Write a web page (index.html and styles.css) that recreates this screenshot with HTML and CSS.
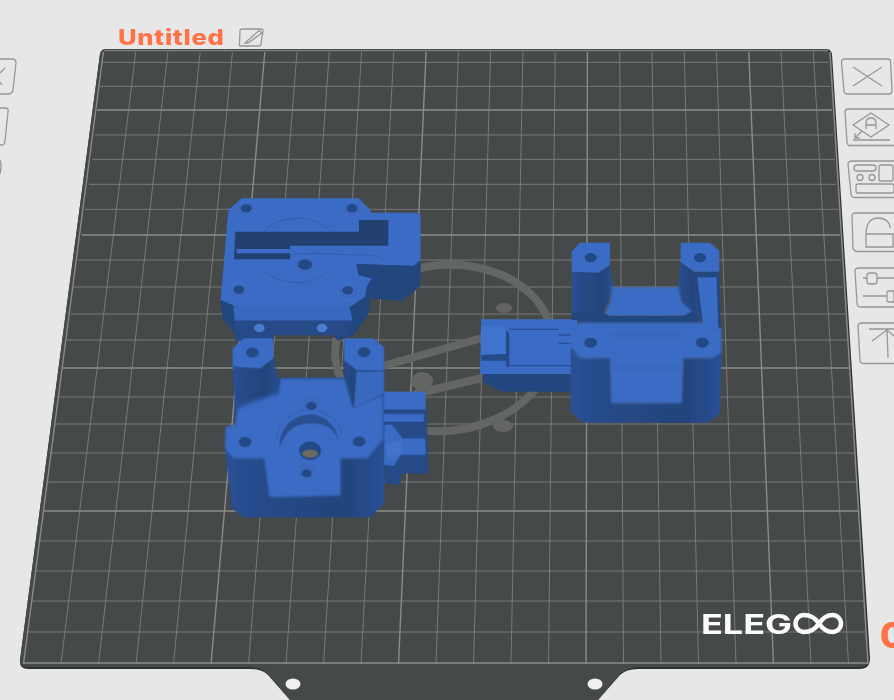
FILE: index.html
```html
<!DOCTYPE html>
<html lang="en">
<head>
<meta charset="utf-8">
<title>Untitled</title>
<link rel="stylesheet" href="styles.css">
</head>
<body>
<main class="stage">
<svg class="scene" width="894" height="700" viewBox="0 0 894 700" xmlns="http://www.w3.org/2000/svg">
  <defs>
    <filter id="soft" x="-5%" y="-5%" width="110%" height="110%"><feGaussianBlur stdDeviation="0.45"/></filter>
    <filter id="edge" x="-10%" y="-10%" width="120%" height="120%"><feGaussianBlur stdDeviation="2.5"/></filter>
    <filter id="shade" x="-30%" y="-30%" width="160%" height="160%"><feGaussianBlur stdDeviation="7"/></filter>
    <linearGradient id="sideA" x1="0" x2="1" y1="0" y2="0">
      <stop offset="0" stop-color="#2a5096"/><stop offset=".25" stop-color="#264a88"/><stop offset=".75" stop-color="#23447c"/><stop offset="1" stop-color="#2a5096"/>
    </linearGradient>
  </defs>

  <!-- print bed -->
  <g filter="url(#soft)">
    <path class="bed-edge" d="M106 49H826Q831 49 832 54L870 658Q870 669 860 669H638Q626 669 620 675L598 700H290L268 675Q262 669 250 669H28Q19 669 20 660L100 54Q101 49 106 49Z"/>
    <path class="bed" d="M106 49.500H826Q830 49.500 831 55L869 658Q869 667 860 667H638Q626 668 620 674L598 700H290L268 674Q262 668 250 667H28Q20 667 20 660L100 54Q101 49.500 106 49.500Z"/>
    <ellipse class="hole" cx="293" cy="684" rx="7.5" ry="5.5"/>
    <ellipse class="hole" cx="595" cy="684" rx="7.5" ry="5.5"/>
    <path class="bed-top" d="M104 50.500H828"/>

    <g class="grid">
      <path d="M135.7 52L61 664M167.9 52L98.5 664M200.2 52L136 664M232.5 52L173.5 664M297 52L248.5 664M329.3 52L286 664M361.6 52L323.5 664M393.8 52L361 664M458.4 52L436 664M490.6 52L473.5 664M522.9 52L511 664M555.2 52L548.5 664M619.7 52L623.5 664M652 52L661 664M684.3 52L698.5 664M716.5 52L736 664M781 52L811 664M813.3 52L848.5 664"/>
      <path d="M102 62.3H829M99 86.3H830M95 135H833M92 159.3H835M89 184.3H836M85 209.3H838M78 260H841M74 287H843M71 314H845M67 340H847M59 397H850M55 424H852M51 453H854M47 482H856M39 541H860M35 571H862M31 601H864M27 632H866"/>
    </g>
    <g class="grid-major">
      <path d="M103.4 52L23.5 664M264.8 52L211 664M426.1 52L398.5 664M587.4 52L586 664M748.8 52L773.5 664M830 52L868 664"/>
      <path d="M97 110H832M82 235H840M63 368H849M43 511H858M24 663H868"/>
    </g>

    <!-- bed watermark -->
    <g class="mark">
      <ellipse cx="444" cy="348" rx="109" ry="83" transform="rotate(-6 444 348)"/>
      <path d="M383 366L482 338M415 394L482 378"/>
    </g>
    <ellipse class="mark-dot" cx="504" cy="308" rx="8" ry="5"/>
    <ellipse class="mark-dot" cx="422" cy="381" rx="11" ry="9"/>
    <ellipse class="mark-dot" cx="503" cy="426" rx="10" ry="6"/>

    <!-- brand -->
    <text class="brand" x="701" y="633.500" textLength="91" lengthAdjust="spacingAndGlyphs">ELEG</text>
    <path class="brand-loop" d="M819 623.5C815 617.500 811 615 804 615A8.500 8.500 0 0 0 804 632C811 632 815 629.500 819 623.500C823 617.500 827 615 832.500 615A8.500 8.500 0 0 1 832.500 632C827 632 823 629.500 819 623.500Z"/>
  </g>

  <!-- part A : plate with slot -->
  <g class="part" transform="translate(210 190) scale(.3333)" filter="url(#soft)">
    <path class="dark" d="M30 320L38 385L72 428L78 452H185L192 435H365L385 452L430 436L475 375L482 325L575 332L630 290L632 215L445 222L440 250L470 265L465 320L420 350H80Z"/>
    <path class="light" d="M95 25H445L482 60V68H620Q632 68 632 80V210L610 228L440 222L445 255L485 265L470 290L465 320L420 350H80L32 330L55 60Z"/>
    <path class="dark" d="M440 222L610 228L632 212L630 290L575 332L482 325L485 265L445 255Z"/>
    <path class="mid" d="M70 348L418 348L428 392H74Z"/>
    <path class="side-dark" d="M74 392H428L415 436H192L185 452H78Z"/>
    <path class="navy" d="M76 125H447V90H535V167H240V208H72Z"/>
    <path class="light" d="M80 177H240V190H80Z"/>
    <path class="thin" d="M165 122C190 95 230 85 265 85C310 85 345 105 365 125M160 240C185 265 225 278 265 278C305 278 340 262 358 240M240 198C260 188 280 192 310 190L440 195C475 195 500 195 515 207"/>
    <ellipse class="sink" cx="110" cy="58" rx="30" ry="23"/><ellipse class="hole-in" cx="109" cy="55" rx="16" ry="12"/>
    <ellipse class="sink" cx="427" cy="58" rx="30" ry="23"/><ellipse class="hole-in" cx="426" cy="55" rx="16" ry="12"/>
    <ellipse class="sink" cx="88" cy="302" rx="30" ry="23"/><ellipse class="hole-in" cx="87" cy="299" rx="16" ry="12"/>
    <ellipse class="sink" cx="415" cy="305" rx="30" ry="23"/><ellipse class="hole-in" cx="413" cy="301" rx="16" ry="12"/>
    <ellipse class="sink" cx="284" cy="226" rx="36" ry="27"/><ellipse class="hole-in" cx="285" cy="224" rx="21" ry="15"/>
    <ellipse class="pale" cx="148" cy="414" rx="16" ry="13"/>
    <ellipse class="pale" cx="336" cy="414" rx="16" ry="13"/>
  </g>

  <!-- part B : extruder body -->
  <g class="part" transform="translate(210 330) scale(.3333)" filter="url(#soft)">
    <path class="side-dark" d="M515 235H650L655 430H575L570 465L525 460Z"/>
    <path class="light" d="M518 185H640Q647 185 647 195V238H518Z"/>
    <path class="light" d="M518 252H642V275H518Z"/>
    <path class="light" d="M523 285L545 283L578 325H645L648 375H572L552 408L520 405Z"/>
    <path class="pale" d="M525 345L575 330V372L535 385Z" opacity=".5"/>
    <path class="side" fill="url(#sideA)" d="M68 55L100 25H190V85L200 143H402V35L410 25H490L522 52V520L480 562H100L65 535L45 355L48 290L76 285Z"/>
    <path class="light" filter="url(#edge)" d="M82 238L203 195L212 146H405L428 232L518 195L520 325L472 385H392V497L178 502L163 385H70L45 355L48 290L76 285Z"/>
    <path class="side" filter="url(#edge)" fill="url(#sideA)" d="M68 110H150L190 85L200 143L205 190L80 222Z"/>
    <path class="light" d="M100 25H180Q190 25 190 35V85L150 115L68 110V55Z"/>
    <path class="side" filter="url(#edge)" fill="url(#sideA)" d="M402 90L440 122L432 230L415 170Z"/>
    <path class="mid" d="M440 125H522V190L432 232Z"/>
    <path class="light" d="M410 25H490L522 52V120H440L402 90V35Q402 25 410 25Z"/>
    <path class="soft-line" filter="url(#shade)" d="M90 235L205 195"/>
    <ellipse class="hole-in" cx="127" cy="68" rx="19" ry="15"/>
    <ellipse class="hole-in" cx="462" cy="67" rx="19" ry="15"/>
    <ellipse class="hole-in" cx="105" cy="336" rx="19" ry="15"/>
    <ellipse class="hole-in" cx="447" cy="335" rx="19" ry="15"/>
    <path class="crescent" d="M208 345C212 290 250 255 300 253C345 253 380 290 385 330C370 290 340 280 298 280C255 280 225 305 212 345Z"/>
    <path class="thin" d="M200 325C205 275 250 240 300 240C350 240 390 275 395 310"/>
    <ellipse class="sink" cx="304" cy="218" rx="31" ry="25"/><ellipse class="hole-in" cx="304" cy="228" rx="15" ry="12"/>
    <ellipse class="sink" cx="290" cy="420" rx="31" ry="25"/><ellipse class="hole-in" cx="290" cy="430" rx="15" ry="12"/>
    <ellipse class="hole-in" cx="300" cy="362" rx="33" ry="28"/>
    <ellipse class="through" cx="300" cy="371" rx="24" ry="12"/>
  </g>

  <!-- part C : housing with clip -->
  <g class="part" transform="translate(470 230) scale(.3333)" filter="url(#soft)">
    <path class="dark" d="M40 432H302V485H95L38 455Z"/>
    <path class="light" d="M33 268H320L325 300L305 330V432H30Z"/>
    <path class="navy-line" d="M118 298H265M265 315H302M265 340H302M118 407H302"/>
    <path class="side-dark" d="M108 300L118 310V410H108Z"/>
    <path class="mid-bright" d="M33 290L108 287V372L33 375Z"/>
    <path class="side-dark" d="M33 375L108 372V392L35 392Z"/>
    <path class="side" d="M305 125H385L420 105L428 170L400 250H305Z" fill="url(#sideA)"/>
    <path class="side" d="M632 95L672 125L688 270L640 245L625 170Z" fill="url(#sideA)"/>
    <path class="light" filter="url(#edge)" d="M425 172H625L635 215L668 245L640 258H400L420 215Z"/>
    <path class="dark" d="M305 248H400L420 258H640L668 245L688 262L688 280H325V270H305Z"/>
    <path class="dark" d="M672 125H748L752 295H700L686 250Z"/>
    <path class="light" d="M682 142H740L745 295H700Z"/>
    <path class="light" d="M330 38H420V105L385 128L305 125V65Z"/>
    <path class="light" d="M632 38H720L748 62V125L672 125L632 95Z"/>
    <path class="side" d="M302 350L330 385H420L425 520H635L640 385H725L755 360L750 550L715 578H340L302 545Z" fill="url(#sideA)"/>
    <path class="light" filter="url(#edge)" d="M325 278H700L755 296V368L725 385H640L636 520H424L420 385H330L302 350V330Z"/>
    <path class="mid" d="M408 305H652L625 325H440Z"/>
    <path class="mid" d="M425 405H635V420H425Z"/>
    <ellipse class="hole-in" cx="362" cy="83" rx="18" ry="14"/>
    <ellipse class="hole-in" cx="690" cy="83" rx="18" ry="14"/>
    <ellipse class="hole-in" cx="362" cy="338" rx="19" ry="15"/>
    <ellipse class="hole-in" cx="697" cy="338" rx="19" ry="15"/>
  </g>

  <!-- right toolbar -->
  <g class="tools" filter="url(#soft)">
    <path d="M845 59H888Q890.500 59 890.600 62L892 91Q892 94 889 94H847Q844.500 94 844 91L841.500 62Q841.500 59 845 59Z"/>
    <path d="M853 67L882 86M882 67L853 86"/>
    <path d="M848 109H894M848 145.500H894M848 109Q845 109 845 112L847 142Q847 145.500 850 145.500"/>
    <path d="M871 113L889 125L871 137L853 125ZM866 129L866 123Q866 118 871 118Q876 118 876 123V129M866 125H876M853 140H890M862 131L855 138M855 133V138H860"/>
    <path d="M853 161H894M853 197.500H894M853 161Q848 161 848 164L851 194Q851 197.500 855 197.500"/>
    <rect x="854" y="165" width="22" height="6" rx="3"/><circle cx="860" cy="177.500" r="3"/><circle cx="872" cy="177.500" r="3"/><rect x="879" y="165" width="14" height="16" rx="2"/><rect x="856" y="184" width="38" height="9" rx="2"/>
    <path d="M856 213H894M857 251.500H894M856 213Q852 213 852 216L853 248Q854 251.500 857 251.500"/>
    <path d="M866 234H893V247H866ZM866 234C866 222 872 218 878 218C885 218 890 222 890 228"/>
    <path d="M859 268H894M861 307H894M859 268Q855 268 855 271L857 303Q857 307 861 307"/>
    <path d="M863 278H867M877 278H894M863 296H887M870 273H874Q877 273 877 276V281Q877 284 874 284H870Q867 284 867 281V276Q867 273 870 273ZM889 291H894V302H889Q887 302 887 300V293Q887 291 889 291Z"/>
    <path d="M862 323H894M864 363.500H894M862 323Q858 323 858 326L860 360Q860 363.500 864 363.500"/>
    <path d="M869 329H894M887 330L888 358M872 341L887 330L894 336"/>
    <!-- left toolbar -->
    <path d="M0 59H12Q16 59 16 63L13 90Q12 94 8 94H0M0 108H5Q9 108 8 112L5 141Q5 145 1 145H0M0 160Q2 165 0 174M5 68L0 73M0 82L2 85"/>
    <!-- edit icon -->
    <path d="M247 29H261Q263 29 263 31L261 44Q261 46 259 46H241Q239 46 239.500 44L240 31Q240 29 242 29H249M245 43L259 30.500L262 33L248 43Z"/>
  </g>
</svg>
<h1 class="title">Untitled</h1>
<span class="corner">0</span>
</main>
</body>
</html>
```
FILE: styles.css
```css
html, body {
  margin: 0;
  padding: 0;
  background: #e7e7e7;
}
.stage {
  position: relative;
  width: 894px;
  height: 700px;
  overflow: hidden;
  background: #e7e7e7;
}
.scene {
  position: absolute;
  inset: 0;
}
.title {
  position: absolute;
  left: 118px;
  top: 24px;
  margin: 0;
  font-family: "Inter", "Liberation Sans", sans-serif;
  font-size: 21px;
  font-weight: 800;
  line-height: 28px;
  letter-spacing: 0.6px;
  color: #ff7247;
  transform: scaleX(1.22);
  transform-origin: left center;
}
.corner {
  position: absolute;
  left: 880px;
  top: 612px;
  font-family: "Inter", "Liberation Sans", sans-serif;
  font-size: 36px;
  font-weight: 800;
  line-height: 46px;
  color: #ff7247;
}
.bed { fill: #45484a; }
.bed-edge { fill: #2f3233; }
.bed-top { fill: none; stroke: #7f817d; stroke-width: 1.5; }
.hole { fill: #f0f0f0; }
.grid path { fill: none; stroke: #787b77; stroke-width: 1; }
.grid-major path { fill: none; stroke: #8a8c87; stroke-width: 1.4; }
.mark { fill: none; stroke: #646664; stroke-width: 8; }
.mark-dot { fill: #646664; }
.brand {
  font-family: "Inter", "Liberation Sans", sans-serif;
  font-size: 27.5px;
  font-weight: 700;
  fill: #fafafa;
}
.brand-loop { fill: none; stroke: #fafafa; stroke-width: 4.5; }
.light { fill: #3b6cc5; }
.mid { fill: #3969bf; }
.mid-bright { fill: #4073cd; }
.dark { fill: #24467f; }
.side-dark { fill: #264a88; }
.side { stroke: none; }
.navy { fill: #24406f; }
.navy-line { fill: none; stroke: #2b5094; stroke-width: 4; }
.pale { fill: #4a7bd0; }
.sink { fill: #3a69bf; stroke: #4274cf; stroke-width: 2; }
.hole-in { fill: #234a85; }
.through { fill: #6c6a62; }
.crescent { fill: #2a4f90; }
.soft-line { fill: none; stroke: #3b6cc5; stroke-width: 10; }
.thin { fill: none; stroke: #2f5aa5; stroke-width: 3; stroke-dasharray: 6 2; }
.tools { fill: none; stroke: #979797; stroke-width: 1.3; }
```
